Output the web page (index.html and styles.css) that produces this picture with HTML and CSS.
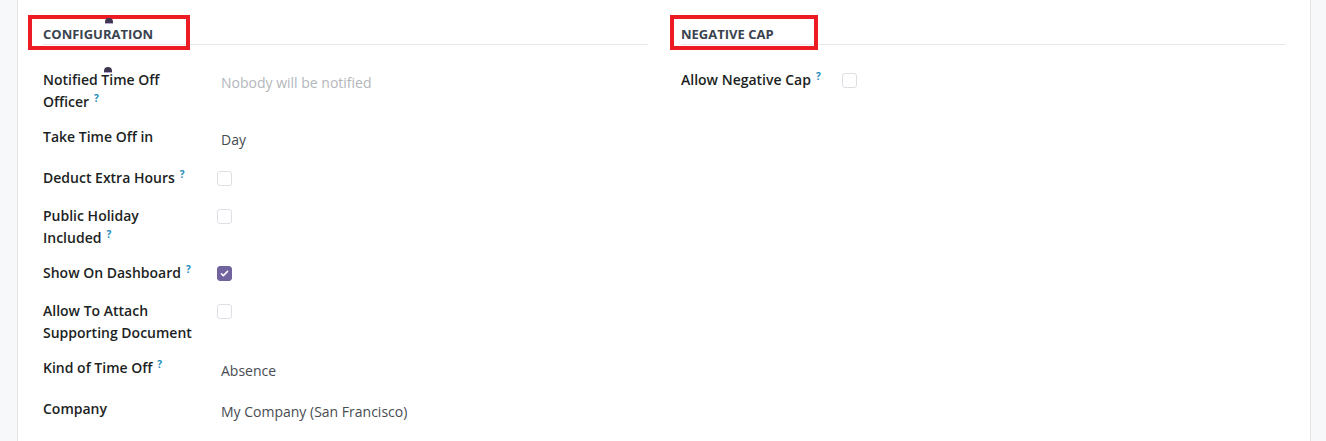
FILE: index.html
```
<!DOCTYPE html>
<html lang="en">
<head>
    <meta charset="UTF-8">
    <meta name="viewport" content="width=device-width, initial-scale=1.0">
    <title>Time Off Type</title>
    <link rel="stylesheet" href="styles.css">
</head>
<body>
    <div class="sheet">
        <div class="groups">
            <div class="group">
                <div class="group-title">
                    <span class="title-text">Configuration</span>
                    <span class="mark-box mark-left"></span>
                    <span class="cursor-mark cursor-title"></span>
                </div>

                <div class="field">
                    <div class="lbl">
                        Notified Time Off Officer<sup>?</sup>
                        <span class="cursor-mark cursor-label"></span>
                    </div>
                    <div class="val"><span class="input placeholder">Nobody will be notified</span></div>
                </div>
                <div class="field">
                    <div class="lbl">Take Time Off in</div>
                    <div class="val"><span class="input">Day</span></div>
                </div>
                <div class="field">
                    <div class="lbl">Deduct Extra Hours<sup>?</sup></div>
                    <div class="val val-check"><span class="check"></span></div>
                </div>
                <div class="field">
                    <div class="lbl">Public Holiday Included<sup>?</sup></div>
                    <div class="val val-check"><span class="check"></span></div>
                </div>
                <div class="field">
                    <div class="lbl">Show On Dashboard<sup>?</sup></div>
                    <div class="val val-check">
                        <span class="check checked">
                            <svg viewBox="0 0 16 16" width="11" height="11"><path d="M3.5 8.3l2.9 2.8 6-6.2" fill="none" stroke="#fff" stroke-width="2.2" stroke-linecap="round" stroke-linejoin="round"/></svg>
                        </span>
                    </div>
                </div>
                <div class="field">
                    <div class="lbl">Allow To Attach Supporting Document</div>
                    <div class="val val-check"><span class="check"></span></div>
                </div>
                <div class="field">
                    <div class="lbl">Kind of Time Off<sup>?</sup></div>
                    <div class="val"><span class="input">Absence</span></div>
                </div>
                <div class="field">
                    <div class="lbl">Company</div>
                    <div class="val"><span class="input">My Company (San Francisco)</span></div>
                </div>
            </div>

            <div class="group group-right">
                <div class="group-title">
                    <span class="title-text">Negative Cap</span>
                    <span class="mark-box mark-right"></span>
                </div>

                <div class="field">
                    <div class="lbl">Allow Negative Cap<sup>?</sup></div>
                    <div class="val val-check"><span class="check"></span></div>
                </div>
            </div>
        </div>
    </div>
</body>
</html>
```

FILE: styles.css
```
body {
    margin: 0;
    padding-left: 17px;
    background: #f7f8fa;
    font-family: "Open Sans", "Noto Sans", sans-serif;
    font-size: 14px;
    color: #1f2328;
}
.sheet {
    width: 1294px;
    min-height: 441px;
    box-sizing: border-box;
    background: #fff;
    border-left: 1px solid #e2e4e8;
    border-right: 1px solid #e2e4e8;
    padding: 0 24px 0 25px;
}
.groups {
    display: grid;
    grid-template-columns: 1fr 1fr;
    column-gap: 33px;
}
.group-title {
    position: relative;
    margin-top: 24px;
    margin-bottom: 24px;
    line-height: 20px;
    border-bottom: 1px solid #e6e8eb;
}
.title-text {
    font-size: 13px;
    font-weight: 700;
    text-transform: uppercase;
    color: #3a4350;
}
/* red annotation boxes drawn over the headings */
.mark-box {
    position: absolute;
    top: -9px;
    height: 35px;
    box-sizing: border-box;
    border: 4px solid #ed1c24;
}
.mark-left {
    left: -15px;
    width: 162px;
}
.mark-right {
    left: -11px;
    width: 148px;
}
.cursor-mark {
    position: absolute;
    width: 8px;
    height: 5px;
    border-radius: 4px 4px 1px 1px;
    background: #3f3752;
    border-bottom: 1px solid #b5a9cf;
}
.cursor-title {
    left: 62px;
    top: -6px;
}
.cursor-label {
    left: 61px;
    top: -2px;
}
.field {
    display: grid;
    grid-template-columns: 174px 1fr;
    margin-bottom: 13px;
}
.group-right .field {
    grid-template-columns: 161px 1fr;
}
.lbl {
    position: relative;
    font-weight: 600;
    line-height: 22px;
    padding-right: 17px;
    color: #1c1f23;
}
.lbl sup {
    font-size: 10px;
    font-weight: 700;
    color: #1a8bbd;
    margin-left: 5px;
    vertical-align: 5px;
    line-height: 0;
}
.input {
    display: block;
    height: 28px;
    line-height: 28px;
    padding: 0 4px;
    color: #474c52;
}
.placeholder {
    color: #b3b7bc;
}
.val-check {
    height: 25px;
    padding-top: 4px;
    box-sizing: border-box;
}
.check {
    display: flex;
    align-items: center;
    justify-content: center;
    width: 15px;
    height: 15px;
    box-sizing: border-box;
    border: 1px solid #dcdfe3;
    border-radius: 3px;
    background: #fff;
}
.checked {
    background: #71639e;
    border-color: #71639e;
}
```
